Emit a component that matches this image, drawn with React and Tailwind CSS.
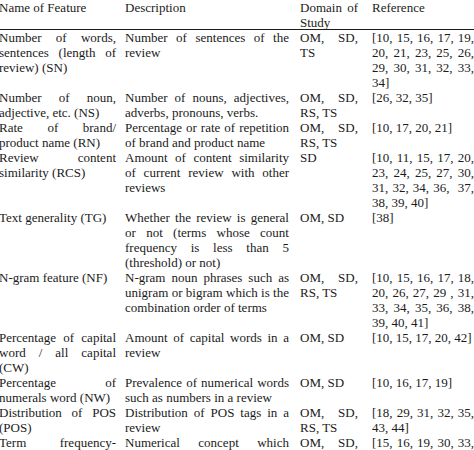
import React from 'react'

const rows = [
  {
    name: ['Number of words,', 'sentences (length of', 'review) (SN)'],
    desc: ['Number of sentences of the', 'review'],
    domain: ['OM, SD,', 'TS'],
    refs: ['[10, 15, 16, 17, 19,', '20, 21, 23, 25, 26,', '29, 30, 31, 32, 33,', '34]'],
  },
  {
    name: ['Number of noun,', 'adjective, etc. (NS)'],
    desc: ['Number of nouns, adjectives,', 'adverbs, pronouns, verbs.'],
    domain: ['OM, SD,', 'RS, TS'],
    refs: ['[26, 32, 35]'],
  },
  {
    name: ['Rate of brand/', 'product name (RN)'],
    desc: ['Percentage or rate of repetition', 'of brand and product name'],
    domain: ['OM, SD,', 'RS, TS'],
    refs: ['[10, 17, 20, 21]'],
  },
  {
    name: ['Review content', 'similarity (RCS)'],
    desc: ['Amount of content similarity', 'of current review with other', 'reviews'],
    domain: ['SD'],
    refs: ['[10, 11, 15, 17, 20,', '23, 24, 25, 27, 30,', '31, 32, 34, 36,  37,', '38, 39, 40]'],
  },
  {
    name: ['Text generality (TG)'],
    desc: ['Whether the review is general', 'or not (terms whose count', 'frequency is less than 5', '(threshold) or not)'],
    domain: ['OM, SD'],
    refs: ['[38]'],
  },
  {
    name: ['N-gram feature (NF)'],
    desc: ['N-gram noun phrases such as', 'unigram or bigram which is the', 'combination order of terms'],
    domain: ['OM, SD,', 'RS, TS'],
    refs: ['[10, 15, 16, 17, 18,', '20, 26, 27, 29 , 31,', '33, 34, 35, 36, 38,', '39, 40, 41]'],
  },
  {
    name: ['Percentage of capital', 'word / all capital', '(CW)'],
    desc: ['Amount of capital words in a', 'review'],
    domain: ['OM, SD'],
    refs: ['[10, 15, 17, 20, 42]'],
  },
  {
    name: ['Percentage of', 'numerals word (NW)'],
    desc: ['Prevalence of numerical words', 'such as numbers in a review'],
    domain: ['OM, SD'],
    refs: ['[10, 16, 17, 19]'],
  },
  {
    name: ['Distribution of POS', '(POS)'],
    desc: ['Distribution of POS tags in a', 'review'],
    domain: ['OM, SD,', 'RS, TS'],
    refs: ['[18, 29, 31, 32, 35,', '43, 44]'],
  },
  {
    name: ['Term frequency-'],
    desc: ['Numerical concept which'],
    domain: ['OM, SD,'],
    refs: ['[15, 16, 19, 30, 33,'],
    open: true,
  },
]

// lines are fixed as in the printed table; all but the last one are justified
const Cell = ({ lines, className, open }) => (
  <div className={className}>
    {lines.map((l, i) =>
      i < lines.length - 1 || open ? (
        <div key={i} className="text-justify [text-align-last:justify] whitespace-pre-wrap">{l}</div>
      ) : (
        <div key={i} className="whitespace-pre-wrap">{l}</div>
      )
    )}
  </div>
)

const Row = ({ r, head }) => (
  <div className={head ? 'flex h-[30px] border-b border-[#1b1b1b]' : 'flex'}>
    <Cell lines={r.name} open={r.open} className="w-[117px] shrink-0" />
    <Cell lines={r.desc} open={r.open} className="w-[164px] ml-[9px] shrink-0" />
    <Cell lines={r.domain} open={r.open} className="w-[58px] ml-[11px] shrink-0" />
    <Cell lines={r.refs} open={r.open} className="w-[102px] ml-[14px] shrink-0" />
  </div>
)

export default function App() {
  return (
    <div className="w-[474px] h-[450px] overflow-hidden bg-white">
      <div className="-ml-[1px] w-[480px] text-[13px] leading-[15px] text-[#1b1b1b] font-[family-name:'Liberation_Serif',serif]">
        <Row
          head
          r={{ name: ['Name of Feature'], desc: ['Description'], domain: ['Domain of', 'Study'], refs: ['Reference'] }}
        />
        {rows.map((r, i) => (
          <Row key={i} r={r} />
        ))}
      </div>
    </div>
  )
}
